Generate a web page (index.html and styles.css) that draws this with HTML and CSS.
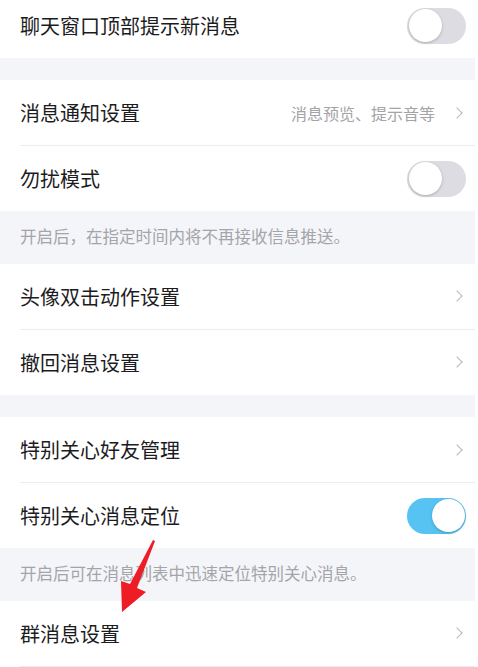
FILE: index.html
```html
<!DOCTYPE html>
<html lang="zh-CN">
<head>
    <meta charset="UTF-8">
    <meta name="viewport" content="width=device-width, initial-scale=1.0">
    <title>消息设置</title>
    <link rel="stylesheet" href="styles.css">
</head>
<body>
    <div class="page">
        <section class="group first">
            <div class="row">
                <span class="label">聊天窗口顶部提示新消息</span>
                <span class="switch"></span>
            </div>
        </section>

        <section class="group">
            <div class="row">
                <span class="label">消息通知设置</span>
                <span class="value">消息预览、提示音等</span>
                <span class="chevron"></span>
            </div>
            <div class="row">
                <span class="label">勿扰模式</span>
                <span class="switch"></span>
            </div>
        </section>
        <p class="note">开启后，在指定时间内将不再接收信息推送。</p>

        <section class="group">
            <div class="row">
                <span class="label">头像双击动作设置</span>
                <span class="chevron"></span>
            </div>
            <div class="row">
                <span class="label">撤回消息设置</span>
                <span class="chevron"></span>
            </div>
        </section>

        <section class="group spaced">
            <div class="row">
                <span class="label">特别关心好友管理</span>
                <span class="chevron"></span>
            </div>
            <div class="row">
                <span class="label">特别关心消息定位</span>
                <span class="switch on"></span>
            </div>
        </section>
        <p class="note">开启后可在消息列表中迅速定位特别关心消息。</p>

        <section class="group">
            <div class="row">
                <span class="label">群消息设置</span>
                <span class="chevron"></span>
            </div>
            <div class="row"></div>
        </section>

        <!-- annotation arrow drawn over the screenshot -->
        <svg class="arrow" width="60" height="80" viewBox="0 0 60 80">
            <path d="M43 2 L45 3 L27 50 L36 54 L12 74 L11 43 L20 46 Z" fill="#ee1c24"/>
        </svg>
    </div>
</body>
</html>
```

FILE: styles.css
```css
body {
    margin: 0;
    background: #fff;
    font-family: "Noto Sans CJK SC", "Noto Sans", sans-serif;
    overflow: hidden;
}
.page {
    position: relative;
    width: 475px;
    height: 667px;
    background: #f4f5f8;
    overflow: hidden;
}
.group {
    background: #fff;
}
.group.first {
    margin-top: -7px;
    margin-bottom: 22px;
}
.group.spaced {
    margin-top: 22.5px;
}
.row {
    display: flex;
    align-items: center;
    height: 65px;
    margin-left: 20px;
    padding-right: 9px;
}
.row + .row {
    border-top: 1px solid #ececf0;
}
.label {
    flex: 1;
    font-size: 20px;
    color: #1c1c1e;
}
.value {
    font-size: 16px;
    color: #a3a3a8;
    margin-right: 18px;
}
.chevron {
    width: 7px;
    height: 7px;
    margin-right: 5px;
    border-top: 1.5px solid #b8b8bd;
    border-right: 1.5px solid #b8b8bd;
    transform: rotate(45deg);
}
.switch {
    position: relative;
    width: 59px;
    height: 36px;
    border-radius: 18px;
    background: #dcdce2;
}
.switch::after {
    content: "";
    position: absolute;
    top: 1.5px;
    left: 1.5px;
    width: 33px;
    height: 33px;
    border-radius: 50%;
    background: #fff;
    box-shadow: 0 1px 3px rgba(0, 0, 0, 0.22);
}
.switch.on {
    background: #56c3f2;
}
.switch.on::after {
    left: 24.5px;
}
.note {
    margin: 0;
    height: 52.5px;
    line-height: 50px;
    padding-left: 20px;
    font-size: 16.5px;
    color: #a4a4aa;
}
.arrow {
    position: absolute;
    left: 110px;
    top: 538px;
}
```
